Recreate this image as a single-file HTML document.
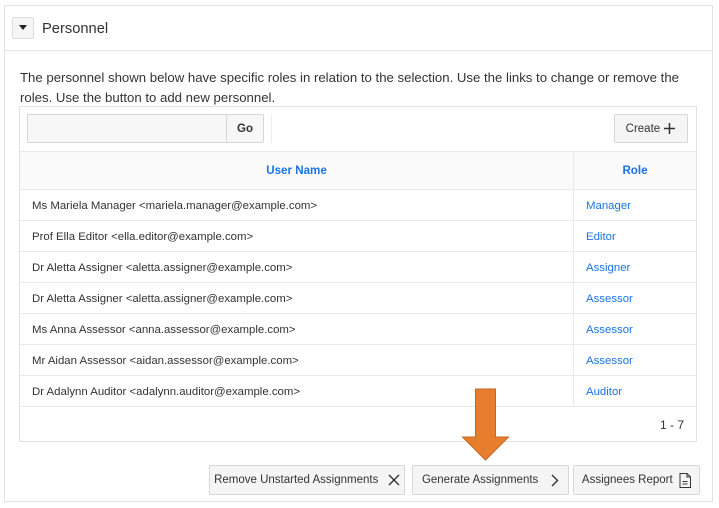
<!DOCTYPE html>
<html><head><style>
*{box-sizing:border-box;margin:0;padding:0}
body{width:719px;height:508px;background:#fff;font-family:"Liberation Sans",sans-serif;color:#333;position:relative;overflow:hidden}
.a{position:absolute}
.panel{left:4px;top:5px;width:709px;height:497px;border:1px solid #e2e2e2;background:#fff}
.hdr{left:5px;top:6px;width:707px;height:45px;border-bottom:1px solid #e6e6e6}
.tog{left:12px;top:17px;width:22px;height:22px;background:#f5f5f5;border:1px solid #ddd;border-radius:2px}
.btn{background:#f5f5f5;border:1px solid #d8d8d8;border-radius:2px;font-size:11.5px;color:#333;display:flex;align-items:center;justify-content:center}
.row{left:20px;width:676px;height:31px;border-top:1px solid #e8e8e8;font-size:11.4px}
.row span{position:absolute;top:10px}
.row .r{left:566px;color:#1a73e8}
</style></head><body>
<div class="a panel"></div>
<div class="a hdr"></div>
<div class="a tog"><svg width="20" height="20" style="position:absolute;left:0;top:0"><path d="M6 7h8l-4 5z" fill="#222"/></svg></div>
<div class="a" style="left:42px;top:21px;font-size:14.7px;color:#333">Personnel</div>
<div class="a" style="left:20px;top:68px;width:690px;font-size:13.2px;line-height:20px">The personnel shown below have specific roles in relation to the selection. Use the links to change or remove the roles. Use the button to add new personnel.</div>
<div class="a" style="left:19px;top:106px;width:678px;height:336px;border:1px solid #e2e2e2"></div>
<div class="a" style="left:27px;top:114px;width:200px;height:29px;background:#f7f7f7;border:1px solid #d8d8d8"></div>
<div class="a btn" style="left:226px;top:114px;width:38px;height:29px;font-weight:bold;background:#f7f7f7">Go</div>
<div class="a" style="left:271px;top:114px;width:1px;height:29px;background:#eee"></div>
<div class="a btn" style="left:614px;top:114px;width:74px;height:29px">Create&nbsp;<svg width="13" height="13"><path d="M6.5 1v11M1 6.5h11" stroke="#333" stroke-width="1.5"/></svg></div>
<div class="a" style="left:20px;top:151px;width:676px;height:38px;background:#fafafa;border-top:1px solid #e8e8e8"></div>
<div class="a" style="left:573px;top:151px;width:1px;height:256px;background:#e8e8e8"></div>
<div class="a" style="left:20px;top:164px;width:553px;text-align:center;font-size:11.6px;font-weight:bold;color:#1a73e8">User Name</div>
<div class="a" style="left:574px;top:164px;width:122px;text-align:center;font-size:11.6px;font-weight:bold;color:#1a73e8">Role</div>
<div class="a row" style="top:189px"><span style="left:12px">Ms Mariela Manager &lt;mariela.manager@example.com&gt;</span><span class="r">Manager</span></div>
<div class="a row" style="top:220px"><span style="left:12px">Prof Ella Editor &lt;ella.editor@example.com&gt;</span><span class="r">Editor</span></div>
<div class="a row" style="top:251px"><span style="left:12px">Dr Aletta Assigner &lt;aletta.assigner@example.com&gt;</span><span class="r">Assigner</span></div>
<div class="a row" style="top:282px"><span style="left:12px">Dr Aletta Assigner &lt;aletta.assigner@example.com&gt;</span><span class="r">Assessor</span></div>
<div class="a row" style="top:313px"><span style="left:12px">Ms Anna Assessor &lt;anna.assessor@example.com&gt;</span><span class="r">Assessor</span></div>
<div class="a row" style="top:344px"><span style="left:12px">Mr Aidan Assessor &lt;aidan.assessor@example.com&gt;</span><span class="r">Assessor</span></div>
<div class="a row" style="top:375px"><span style="left:12px">Dr Adalynn Auditor &lt;adalynn.auditor@example.com&gt;</span><span class="r">Auditor</span></div>
<div class="a row" style="top:406px"></div>
<div class="a" style="left:600px;top:418px;width:84px;text-align:right;font-size:12px">1 - 7</div>
<div class="a btn" style="left:209px;top:465px;width:196px;height:30px">Remove Unstarted Assignments&nbsp;&nbsp;&nbsp;<svg width="12" height="12"><path d="M1 1l10 10M11 1L1 11" stroke="#333" stroke-width="1.4"/></svg></div>
<div class="a btn" style="left:412px;top:465px;width:157px;height:30px">Generate Assignments&nbsp;&nbsp;&nbsp;&nbsp;<svg width="8" height="13"><path d="M1 1l5.5 5.5L1 12" stroke="#333" stroke-width="1.4" fill="none"/></svg></div>
<div class="a btn" style="left:573px;top:465px;width:127px;height:30px">Assignees Report&nbsp;&nbsp;<svg width="12" height="15"><path d="M1 .5h7l3.5 3.5v10.5H1z M8 .5v3.5h3.5 M3.5 8.5h5M3.5 11h5" stroke="#333" fill="none"/></svg></div>
<svg class="a" style="left:460px;top:388px" width="52" height="74"><path d="M15.5 1h20v48h13L25.5 72 2.5 49h13z" fill="#e87d2e" stroke="#c8641e" stroke-width="1"/></svg>
</body></html>
